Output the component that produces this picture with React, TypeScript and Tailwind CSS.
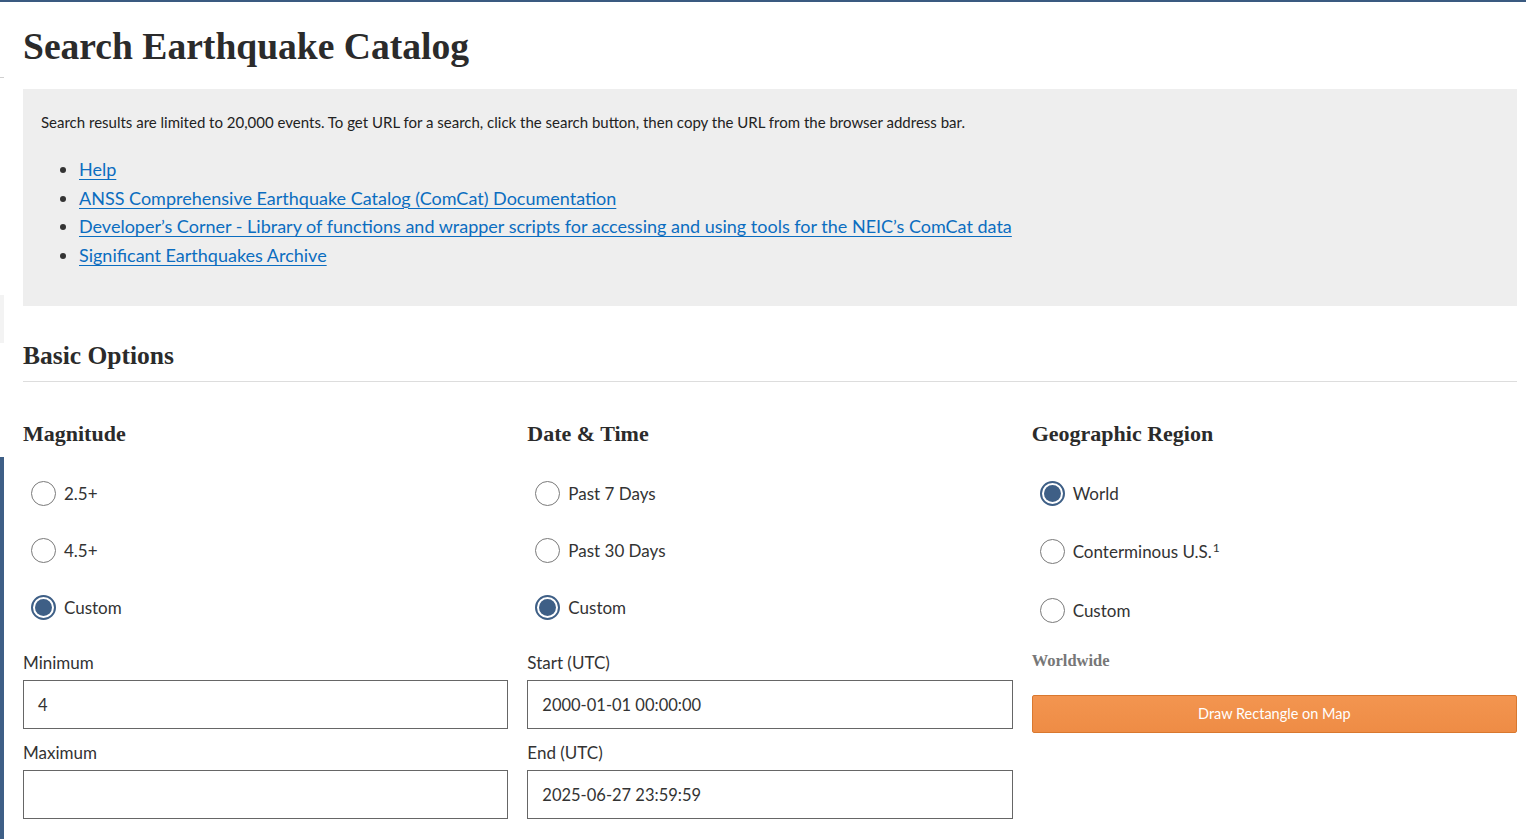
import React from 'react';

const serif = { fontFamily: '"Liberation Serif", "DejaVu Serif", serif' };
const sans = { fontFamily: 'Lato, "Noto Sans", sans-serif' };

function Radio({ label, checked, sup, tall }: { label: string; checked?: boolean; sup?: string; tall?: boolean }) {
  return (
    <label className={`flex items-center ${tall ? 'h-[59px]' : 'h-[57px]'} pl-[8px] gap-[8px] text-[17px] text-[#333]`}>
      {checked ? (
        <span className="w-[25px] h-[25px] rounded-full border-[2px] border-[#3e5f86] bg-white flex items-center justify-center">
          <span className="w-[17px] h-[17px] rounded-full bg-[#3e5f86]" />
        </span>
      ) : (
        <span className="w-[25px] h-[25px] rounded-full border border-[#7a7a7a] bg-white" />
      )}
      <span>
        {label}
        {sup && <sup className="text-[12px] ml-[1px]">{sup}</sup>}
      </span>
    </label>
  );
}

function Field({ label, value }: { label: string; value?: string }) {
  return (
    <div className="flex flex-col">
      <div className="text-[17px] text-[#333] h-[33px] leading-[32px]">{label}</div>
      <div className="h-[49px] border border-[#666] bg-white flex items-center px-[14px] pt-[2px] text-[16.5px] text-[#333]">
        {value}
      </div>
    </div>
  );
}

export default function App() {
  const links = [
    'Help',
    'ANSS Comprehensive Earthquake Catalog (ComCat) Documentation',
    'Developer\u2019s Corner - Library of functions and wrapper scripts for accessing and using tools for the NEIC\u2019s ComCat data',
    'Significant Earthquakes Archive',
  ];

  return (
    <div className="w-[1526px] h-[839px] overflow-hidden bg-white border-t-[2px] border-[#3a5a80] flex" style={sans}>
      {/* clipped side navigation remnants */}
      <div className="w-[4px] flex flex-col shrink-0">
        <div className="h-[75px]" />
        <div className="h-[1px] bg-[#cfcfcf]" />
        <div className="h-[217px]" />
        <div className="h-[48px] bg-[#f3f3f3]" />
        <div className="h-[114px]" />
        <div className="flex-1 bg-[#3e5f86]" />
      </div>

      <div className="flex-1 pl-[19px] pr-[9px]">
        <h1 className="text-[37.6px] font-bold text-[#2b2b2b] h-[87px] pt-[21px] leading-[48px]" style={serif}>
          Search Earthquake Catalog
        </h1>

        <div className="bg-[#eeeeee] h-[217px] px-[18px] pt-[23px]">
          <p className="text-[15px] text-[#222] leading-[20px]">
            Search results are limited to 20,000 events. To get URL for a search, click the search button, then copy the URL from the browser address bar.
          </p>
          <ul className="mt-[23px] pl-[38px] list-disc text-[18px] leading-[28.7px] text-[#333]">
            {links.map((l) => (
              <li key={l}>
                <a href="#" className="text-[#0b6dc0] underline underline-offset-[3px] decoration-[1px]">
                  {l}
                </a>
              </li>
            ))}
          </ul>
        </div>

        <h2 className="text-[25.5px] font-bold text-[#2b2b2b] pt-[33px] pb-[8px] leading-[34px] border-b border-[#dddddd]" style={serif}>
          Basic Options
        </h2>

        <div className="grid grid-cols-3 gap-x-[19px] pt-[38px]">
          <div>
            <h3 className="text-[22px] font-bold text-[#2b2b2b] leading-[28px] mb-[17px]" style={serif}>Magnitude</h3>
            <Radio label="2.5+" />
            <Radio label="4.5+" />
            <Radio label="Custom" checked />
            <div className="flex flex-col gap-[8px] mt-[11px]">
              <Field label="Minimum" value="4" />
              <Field label="Maximum" />
            </div>
          </div>
          <div>
            <h3 className="text-[22px] font-bold text-[#2b2b2b] leading-[28px] mb-[17px]" style={serif}>Date &amp; Time</h3>
            <Radio label="Past 7 Days" />
            <Radio label="Past 30 Days" />
            <Radio label="Custom" checked />
            <div className="flex flex-col gap-[8px] mt-[11px]">
              <Field label="Start (UTC)" value="2000-01-01 00:00:00" />
              <Field label="End (UTC)" value="2025-06-27 23:59:59" />
            </div>
          </div>
          <div>
            <h3 className="text-[22px] font-bold text-[#2b2b2b] leading-[28px] mb-[17px]" style={serif}>Geographic Region</h3>
            <Radio label="World" checked />
            <Radio label="Conterminous U.S." sup="1" tall />
            <Radio label="Custom" tall />
            <div className="text-[16.5px] font-bold text-[#777] leading-[22px] mt-[10px]" style={serif}>Worldwide</div>
            <button className="mt-[23px] w-full h-[38px] rounded-[2px] border border-[#d9782f] bg-gradient-to-b from-[#f39550] to-[#ee8c45] text-white text-[14.5px]">
              Draw Rectangle on Map
            </button>
          </div>
        </div>
      </div>
    </div>
  );
}
